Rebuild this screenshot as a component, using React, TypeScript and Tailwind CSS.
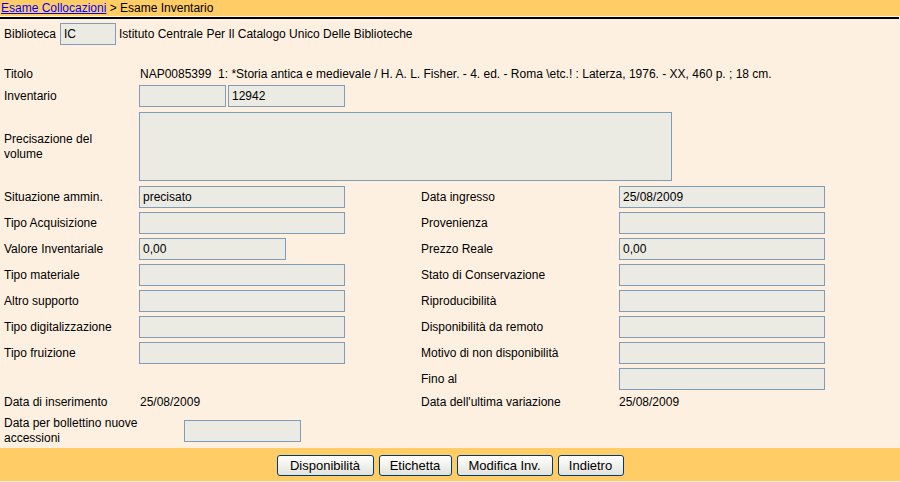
import React from "react";

const font = { fontFamily: '"Liberation Sans", Arial, sans-serif' };

function Box({ value = "", w = "w-[206px]", h = "h-[22px]" }: { value?: string; w?: string; h?: string }) {
  return (
    <div className={`${w} ${h} shrink-0 border border-[#7f9db9] bg-[#ebeae3] pl-[3px] text-[12px] leading-[20px] text-black`}>
      {value}
    </div>
  );
}

function Pair({ label, value, w }: { label: string; value?: string; w?: string }) {
  return (
    <div className="flex items-center">
      <div className="w-[135px] shrink-0">{label}</div>
      <Box value={value} w={w} />
    </div>
  );
}

function Row({
  left,
  leftValue,
  leftW,
  right,
  rightValue,
}: {
  left?: string;
  leftValue?: string;
  leftW?: string;
  right: string;
  rightValue?: string;
}) {
  return (
    <div className="flex h-[22px] items-center">
      <div className="w-[417px] shrink-0">
        {left !== undefined && <Pair label={left} value={leftValue} w={leftW} />}
      </div>
      <div className="flex items-center">
        <div className="w-[198px] shrink-0">{right}</div>
        <Box value={rightValue} />
      </div>
    </div>
  );
}

function Btn({ children, w }: { children: React.ReactNode; w: string }) {
  return (
    <button className={`${w} h-[21px] rounded-[3px] border border-[#003c74] bg-gradient-to-b from-white to-[#e3e3db] text-[13px] leading-[19px] text-black`}>
      {children}
    </button>
  );
}

export default function App() {
  return (
    <div className="flex h-[482px] w-[900px] flex-col overflow-hidden bg-[#fdf0e1] text-[12px] text-black" style={font}>
      <div className="h-[16px] bg-[#ffcc66] pl-[1px] leading-[16px]">
        <a href="#" className="text-[#0000ff] underline">Esame Collocazioni</a> &gt; Esame Inventario
      </div>
      <div className="mr-[1px] mt-[1px] h-[2px] bg-black" />

      <div className="flex flex-col pl-[4px]">
        <div className="mt-[4px] flex h-[22px] items-center">
          <div className="w-[56px]">Biblioteca</div>
          <Box value=" IC" w="w-[56px]" />
          <div className="ml-[3px]">Istituto Centrale Per Il Catalogo Unico Delle Biblioteche</div>
        </div>

        <div className="mt-[18px] flex h-[22px] items-center">
          <div className="w-[136px] shrink-0">Titolo</div>
          <div className="whitespace-pre">
            NAP0085399  1: *Storia antica e medievale / H. A. L. Fisher. - 4. ed. - Roma \etc.! : Laterza, 1976. - XX, 460 p. ; 18 cm.
          </div>
        </div>

        <div className="flex h-[22px] items-center">
          <div className="w-[135px] shrink-0">Inventario</div>
          <Box w="w-[87px]" />
          <div className="w-[2px]" />
          <Box value="12942" w="w-[117px]" />
        </div>

        <div className="mt-[5px] flex items-center">
          <div className="w-[135px] shrink-0 leading-[15px]">
            Precisazione del
            <br />
            volume
          </div>
          <Box w="w-[533px]" h="h-[69px]" />
        </div>

        <div className="mt-[5px] flex flex-col gap-[4px]">
          <Row left="Situazione ammin." leftValue="precisato" right="Data ingresso" rightValue="25/08/2009" />
          <Row left="Tipo Acquisizione" right="Provenienza" />
          <Row left="Valore Inventariale" leftValue="0,00" leftW="w-[147px]" right="Prezzo Reale" rightValue="0,00" />
          <Row left="Tipo materiale" right="Stato di Conservazione" />
          <Row left="Altro supporto" right="Riproducibilità" />
          <Row left="Tipo digitalizzazione" right="Disponibilità da remoto" />
          <Row left="Tipo fruizione" right="Motivo di non disponibilità" />
          <Row right="Fino al" />
        </div>

        <div className="mt-[1px] flex h-[22px] items-center">
          <div className="flex w-[417px] shrink-0">
            <div className="w-[136px] shrink-0">Data di inserimento</div>
            <div>25/08/2009</div>
          </div>
          <div className="w-[198px] shrink-0">Data dell'ultima variazione</div>
          <div>25/08/2009</div>
        </div>

        <div className="mt-[3px] flex items-center">
          <div className="w-[180px] shrink-0 leading-[15px]">
            Data per bollettino nuove
            <br />
            accessioni
          </div>
          <Box w="w-[117px]" />
        </div>
      </div>

      <div className="mt-auto mb-[1px] flex h-[33px] items-center justify-center gap-[5px] bg-[#ffcc66] pt-[2px]">
        <Btn w="w-[97px]">Disponibilità</Btn>
        <Btn w="w-[73px]">Etichetta</Btn>
        <Btn w="w-[96px]">Modifica Inv.</Btn>
        <Btn w="w-[66px]">Indietro</Btn>
      </div>
    </div>
  );
}
